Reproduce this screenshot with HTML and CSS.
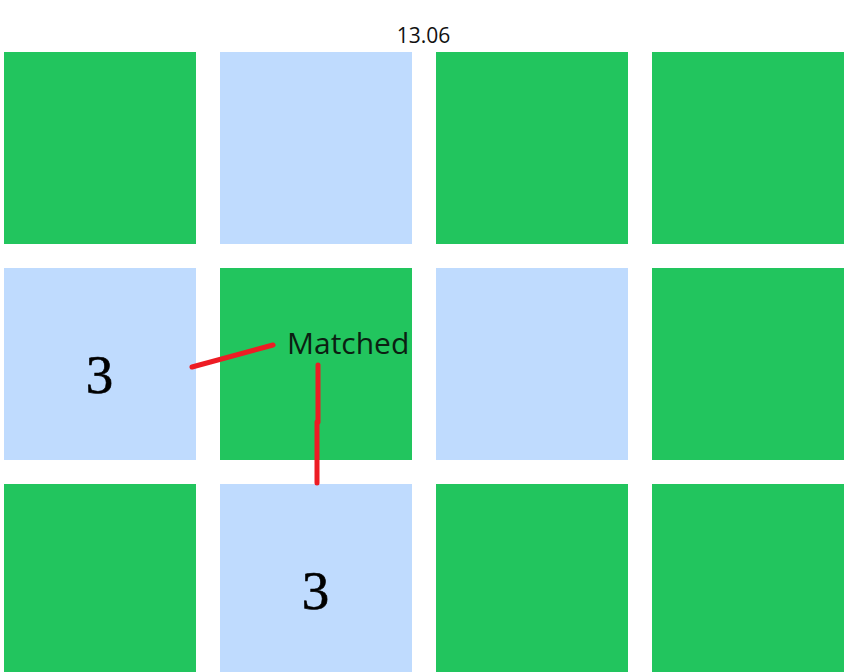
FILE: index.html
```html
<!DOCTYPE html>
<html lang="en">
<head>
<meta charset="utf-8">
<title>Memory game</title>
<link rel="stylesheet" href="styles.css">
</head>
<body>
<div class="page">
  <div class="timer">13.06</div>
  <div class="board">
    <div class="tile green"></div>
    <div class="tile blue"></div>
    <div class="tile green"></div>
    <div class="tile green"></div>

    <div class="tile blue"><span class="num">3</span></div>
    <div class="tile green"></div>
    <div class="tile blue"></div>
    <div class="tile green"></div>

    <div class="tile green"></div>
    <div class="tile blue"><span class="num">3</span></div>
    <div class="tile green"></div>
    <div class="tile green"></div>
  </div>

  <svg class="annot" width="847" height="672" viewBox="0 0 847 672" aria-hidden="true">
    <line x1="192" y1="367" x2="273" y2="345" />
    <line x1="318" y1="365" x2="318" y2="422" />
    <line x1="317" y1="422" x2="317" y2="483" />
  </svg>
  <div class="label">Matched</div>
</div>
</body>
</html>
```

FILE: styles.css
```css
html, body {
  margin: 0;
  padding: 0;
  overflow: hidden;
  background: #ffffff;
}

.page {
  position: relative;
  width: 847px;
  height: 672px;
}

.timer {
  box-sizing: border-box;
  height: 52px;
  padding-top: 21px;
  text-align: center;
  font-family: "Open Sans", "Noto Sans", sans-serif;
  font-size: 21px;
  line-height: normal;
  color: #111111;
}

.board {
  display: grid;
  grid-template-columns: repeat(4, 192px);
  grid-auto-rows: 192px;
  gap: 24px;
  justify-content: center;
}

.tile {
  display: flex;
  align-items: center;
  justify-content: center;
}

.green { background: #22c55e; }
.blue { background: #bfdbfe; }

.num {
  font-family: "Liberation Serif", "DejaVu Serif", serif;
  font-size: 55px;
  line-height: 1;
  color: #000000;
  padding-top: 20px;
  -webkit-text-stroke: 0.6px #000000;
}

.annot {
  position: absolute;
  left: 0;
  top: 0;
  pointer-events: none;
}

.annot line {
  stroke: #ed1c24;
  stroke-width: 5;
  stroke-linecap: round;
}

.label {
  position: absolute;
  left: 287px;
  top: 323px;
  font-family: "Open Sans", "Noto Sans", sans-serif;
  font-size: 30px;
  line-height: 40px;
  color: #0b1f12;
}
```
